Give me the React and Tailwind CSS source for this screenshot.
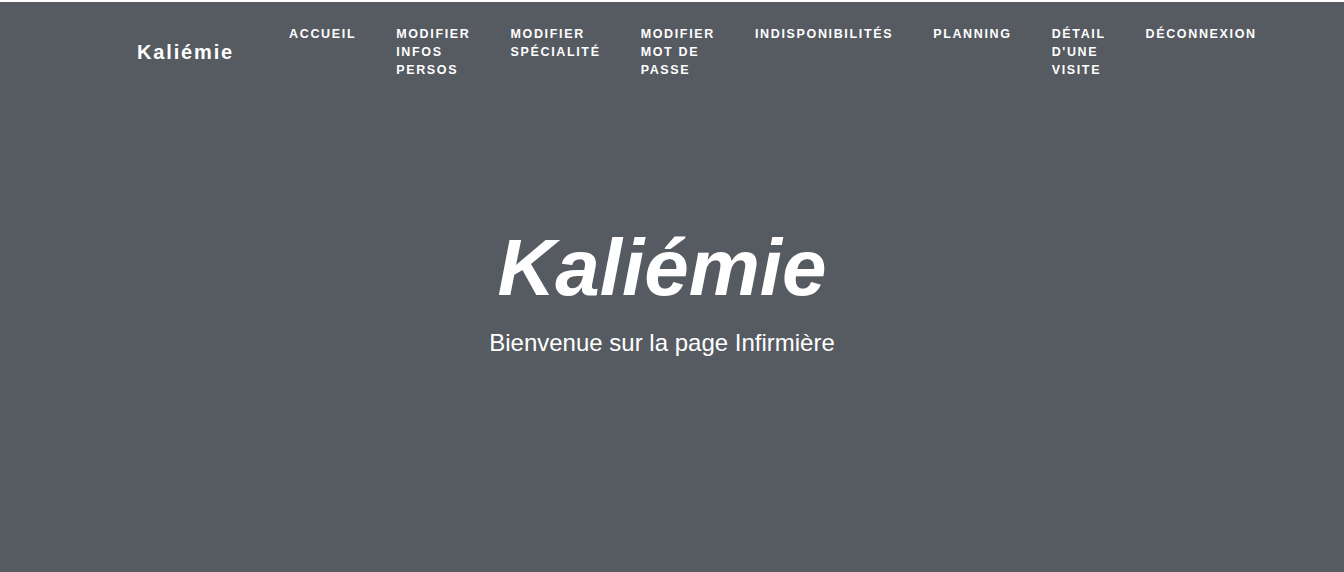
import React from "react";

const LINKS = [
  { label: "Accueil" },
  { label: "Modifier infos persos", wrap: true },
  { label: "Modifier spécialité", wrap: true },
  { label: "Modifier mot de passe", wrap: true },
  { label: "Indisponibilités" },
  { label: "Planning" },
  { label: "Détail d'une visite", wrap: true },
  { label: "Déconnexion" },
];

export default function App() {
  return (
    <div
      className="min-h-[572px] bg-[#565a61] text-white border-t-2 border-white"
      style={{ fontFamily: '"Liberation Sans", Arial, sans-serif' }}
    >
      <nav className="flex items-center pl-[137px] pt-[23px]">
        <a className="text-[20px] font-bold leading-none mr-[55px] tracking-[1.85px]">
          Kaliémie
        </a>
        <ul className="flex items-start gap-[40px]">
          {LINKS.map((l) => (
            <li
              key={l.label}
              className={
                "uppercase font-black text-[12.5px] leading-[18px] tracking-[1.65px] " +
                (l.wrap ? "w-min" : "whitespace-nowrap")
              }
            >
              {l.label}
            </li>
          ))}
        </ul>
      </nav>

      <header className="flex flex-col items-center pt-[149px] pr-[20px]">
        <h1 className="text-[80px] font-bold italic leading-none">Kaliémie</h1>
        <p className="text-[24px] mt-[17px]">Bienvenue sur la page Infirmière</p>
      </header>
    </div>
  );
}
